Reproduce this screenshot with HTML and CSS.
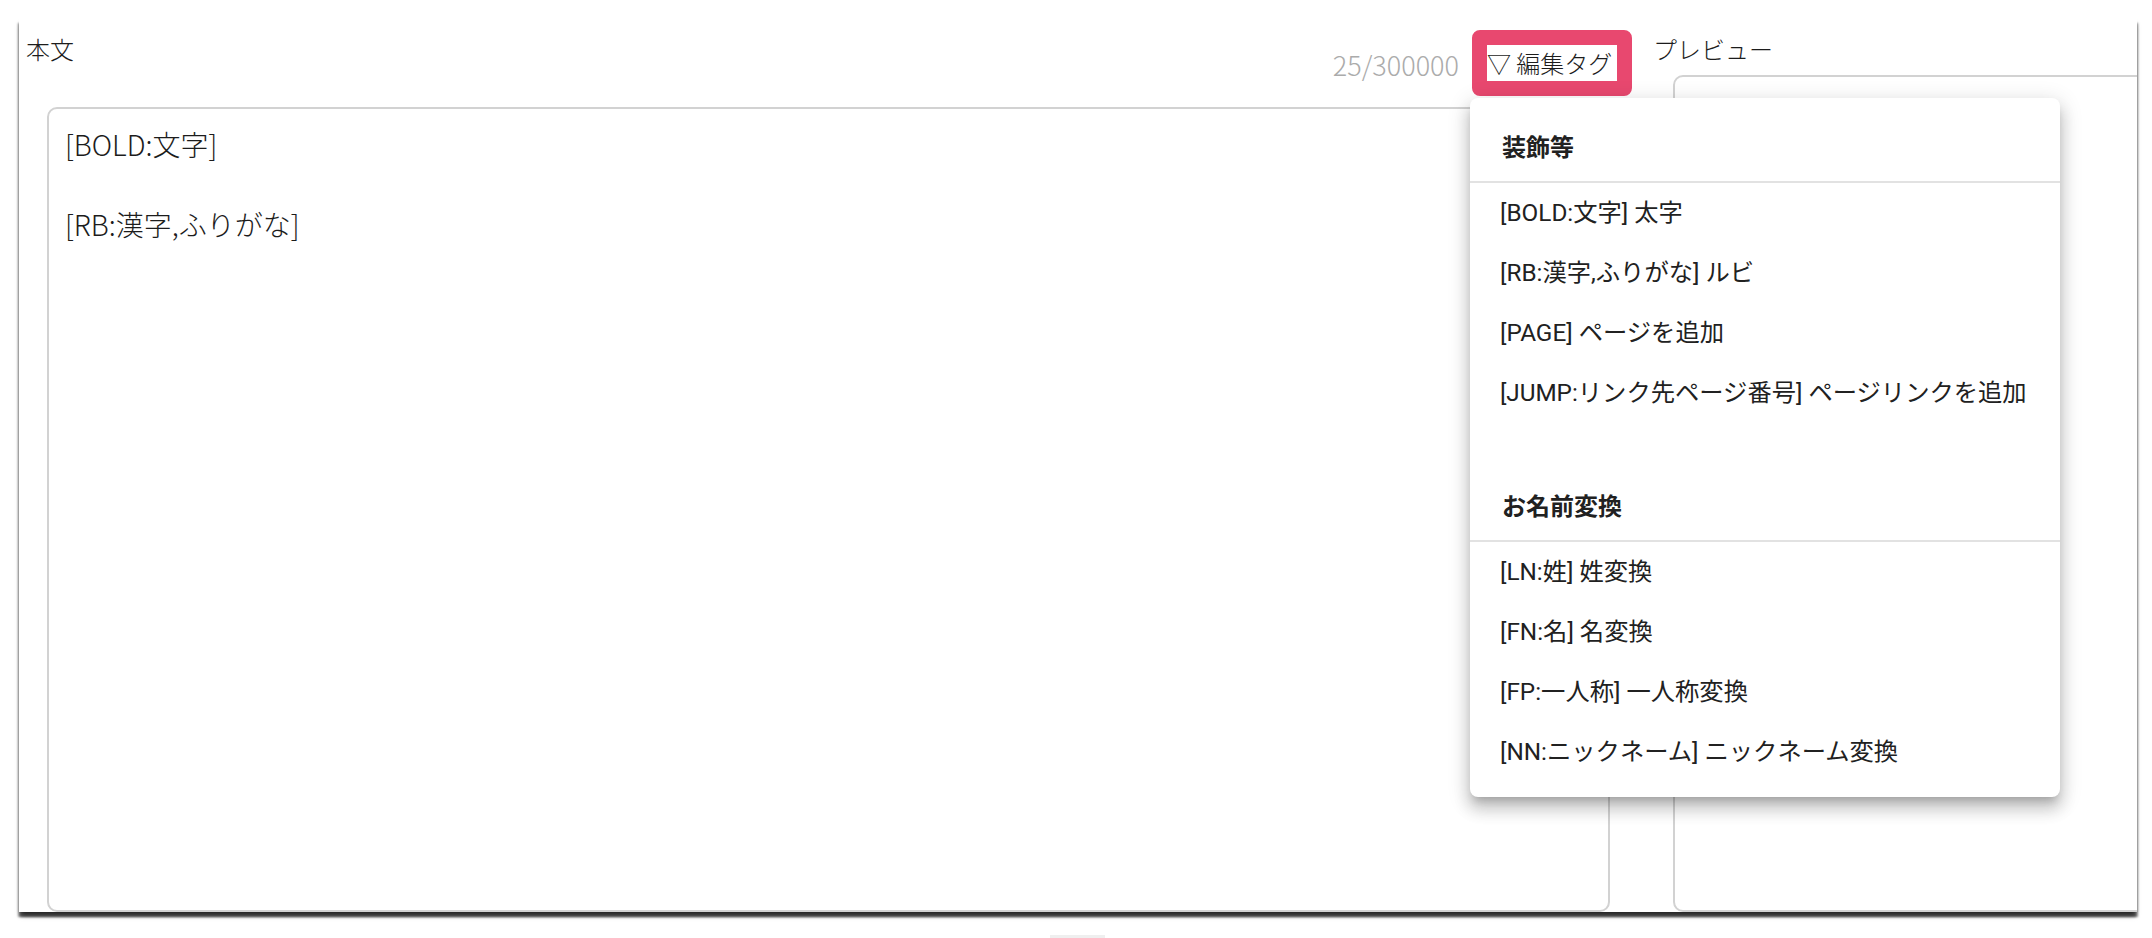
FILE: index.html
```html
<!DOCTYPE html>
<html lang="ja">
<head>
  <meta charset="UTF-8" />
  <meta name="viewport" content="width=device-width, initial-scale=1.0"/>
  <title>本文編集</title>
  <link rel="stylesheet" href="styles.css">
</head>
<body>

  <div class="panel">
    <!-- 本文 -->
    <div class="editor">
      <div class="editor-head">
        <label class="field-label">本文</label>
        <div class="head-tools">
          <span class="counter">25/300000</span>
          <div class="tag-menu">
            <button class="tag-btn">▽ 編集タグ</button>

            <!-- 編集タグ menu (open) -->
            <div class="menu">
              <div class="menu-header">装飾等</div>
              <div class="menu-divider"></div>
              <div class="menu-item">[BOLD:文字] 太字</div>
              <div class="menu-item">[RB:漢字,ふりがな] ルビ</div>
              <div class="menu-item">[PAGE] ページを追加</div>
              <div class="menu-item">[JUMP:リンク先ページ番号] ページリンクを追加</div>

              <div class="menu-header section-gap">お名前変換</div>
              <div class="menu-divider"></div>
              <div class="menu-item">[LN:姓] 姓変換</div>
              <div class="menu-item">[FN:名] 名変換</div>
              <div class="menu-item">[FP:一人称] 一人称変換</div>
              <div class="menu-item">[NN:ニックネーム] ニックネーム変換</div>
            </div>
          </div>
        </div>
      </div>
      <textarea class="body-input">[BOLD:文字]

[RB:漢字,ふりがな]</textarea>
    </div>

    <!-- プレビュー -->
    <div class="preview">
      <label class="field-label">プレビュー</label>
      <div class="preview-box"></div>
    </div>
  </div>

  <div class="below-btn"></div>

</body>
</html>
```

FILE: styles.css
```css
:root {
  --text: #1c1c1c;
  --muted: #ababab;
  --line: #d2d2d2;
  --accent: #e8486f;
  --jp: "Noto Sans CJK JP", sans-serif;
}

body {
  margin: 0;
  height: 938px;
  overflow: hidden;
  background: #fff;
  color: var(--text);
  font-family: var(--jp);
  font-weight: 300;
}

.panel {
  display: flex;
  box-sizing: border-box;
  width: 2118px;
  height: 894px;
  margin: 18px 0 0 19px;
  background: #fff;
  overflow: hidden;
  box-shadow: 0 5px 5px -2px rgba(0, 0, 0, 0.65),
              -1px 5px 2px rgba(0, 0, 0, 0.4),
              1px 5px 2px rgba(0, 0, 0, 0.4);
}

.field-label {
  display: block;
  font-size: 24px;
  line-height: 24px;
}

/* editor column */
.editor {
  flex: none;
  width: 1621px;
  display: flex;
  flex-direction: column;
}

.editor-head {
  display: flex;
  justify-content: space-between;
  align-items: flex-start;
  padding: 12px 8px 0 7px;
}

.editor-head .field-label {
  margin-top: 7px;
}

.head-tools {
  display: flex;
  align-items: flex-start;
}

.counter {
  margin-top: 21px;
  margin-right: 13px;
  font-size: 27px;
  line-height: 28px;
  color: var(--muted);
}

.tag-menu {
  position: relative;
}

.tag-btn {
  box-sizing: border-box;
  width: 160px;
  height: 66px;
  padding: 0;
  background: #fff;
  border: 15px solid var(--accent);
  border-radius: 8px;
  font-family: var(--jp);
  font-weight: 300;
  font-size: 24px;
  line-height: 36px;
  color: var(--text);
  text-align: left;
  white-space: nowrap;
  cursor: pointer;
}

.body-input {
  box-sizing: border-box;
  height: 900px;
  margin: 11px 30px 0 28px;
  padding: 15px 16px;
  border: 2px solid var(--line);
  border-radius: 10px;
  resize: none;
  overflow: hidden;
  outline: none;
  font-family: var(--jp);
  font-weight: 300;
  font-size: 28px;
  line-height: 40px;
  color: var(--text);
}

/* dropdown */
.menu {
  position: absolute;
  top: 68px;
  left: -2px;
  z-index: 10;
  width: 590px;
  padding: 12px 0 15px;
  background: #fff;
  border-radius: 8px;
  font-family: Roboto, "Noto Sans CJK JP", sans-serif;
  font-weight: 400;
  color: #212121;
  box-shadow: 0 7px 8px -4px rgba(0, 0, 0, 0.2),
              0 12px 15px 2px rgba(0, 0, 0, 0.14),
              0 5px 21px 3px rgba(0, 0, 0, 0.12);
}

.menu-header {
  height: 71px;
  box-sizing: border-box;
  padding: 6px 0 0 32px;
  font-size: 24px;
  font-weight: 700;
  line-height: 65px;
}

.menu-header.section-gap {
  margin-top: 46px;
}

.menu-divider {
  height: 2px;
  background: #e2e2e2;
}

.menu-item {
  height: 60px;
  padding-left: 30px;
  font-size: 24.3px;
  line-height: 60px;
  white-space: nowrap;
  cursor: pointer;
}

/* preview column */
.preview {
  flex: 1;
  display: flex;
  flex-direction: column;
  padding: 19px 0 0 13px;
}

.preview-box {
  box-sizing: border-box;
  height: 900px;
  margin: 14px -20px 0 20px;
  border: 2px solid var(--line);
  border-radius: 10px;
}

.below-btn {
  width: 55px;
  height: 10px;
  margin: 23px 0 0 1050px;
  background: #efefef;
}
```
